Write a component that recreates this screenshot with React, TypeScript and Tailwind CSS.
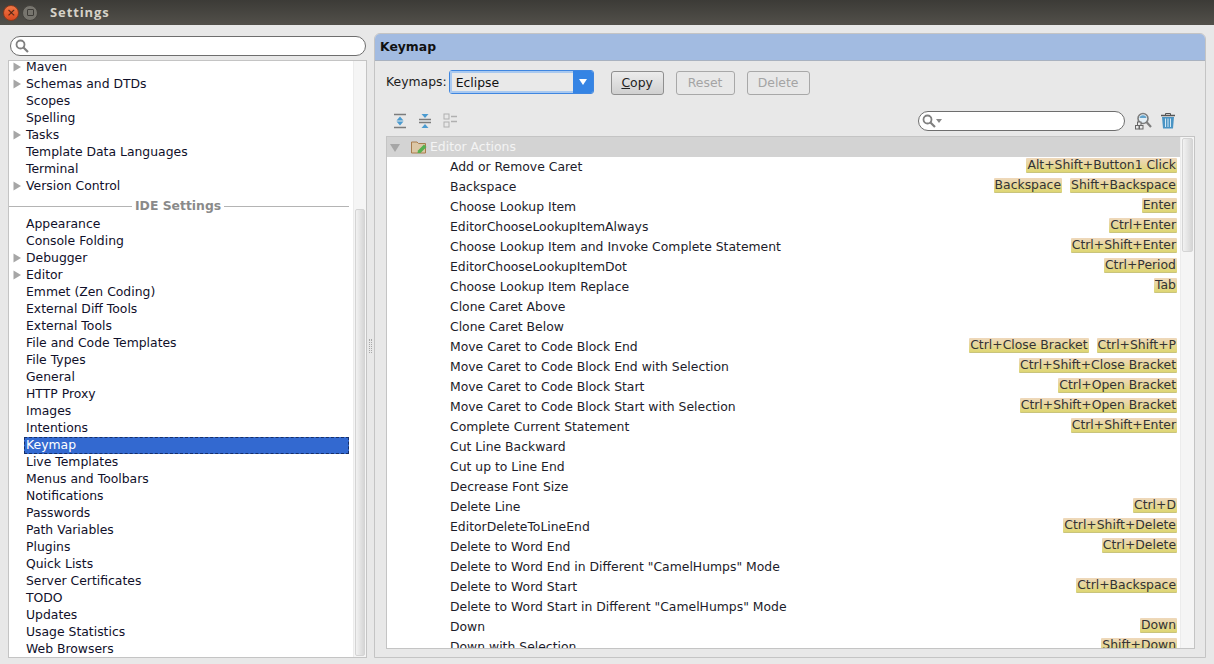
import React from "react";

const top1 = [
  ["Maven", 1], ["Schemas and DTDs", 1], ["Scopes", 0], ["Spelling", 0], ["Tasks", 1],
  ["Template Data Languages", 0], ["Terminal", 0], ["Version Control", 1],
] as const;
const top2 = [
  ["Appearance", 0], ["Console Folding", 0], ["Debugger", 1], ["Editor", 1], ["Emmet (Zen Coding)", 0],
  ["External Diff Tools", 0], ["External Tools", 0], ["File and Code Templates", 0], ["File Types", 0],
  ["General", 0], ["HTTP Proxy", 0], ["Images", 0], ["Intentions", 0], ["Keymap", 0], ["Live Templates", 0],
  ["Menus and Toolbars", 0], ["Notifications", 0], ["Passwords", 0], ["Path Variables", 0], ["Plugins", 0],
  ["Quick Lists", 0], ["Server Certificates", 0], ["TODO", 0], ["Updates", 0], ["Usage Statistics", 0], ["Web Browsers", 0],
] as const;
const rows: [string, string[]][] = [
  ["Add or Remove Caret", ["Alt+Shift+Button1 Click"]],
  ["Backspace", ["Backspace", "Shift+Backspace"]],
  ["Choose Lookup Item", ["Enter"]],
  ["EditorChooseLookupItemAlways", ["Ctrl+Enter"]],
  ["Choose Lookup Item and Invoke Complete Statement", ["Ctrl+Shift+Enter"]],
  ["EditorChooseLookupItemDot", ["Ctrl+Period"]],
  ["Choose Lookup Item Replace", ["Tab"]],
  ["Clone Caret Above", []],
  ["Clone Caret Below", []],
  ["Move Caret to Code Block End", ["Ctrl+Close Bracket", "Ctrl+Shift+P"]],
  ["Move Caret to Code Block End with Selection", ["Ctrl+Shift+Close Bracket"]],
  ["Move Caret to Code Block Start", ["Ctrl+Open Bracket"]],
  ["Move Caret to Code Block Start with Selection", ["Ctrl+Shift+Open Bracket"]],
  ["Complete Current Statement", ["Ctrl+Shift+Enter"]],
  ["Cut Line Backward", []],
  ["Cut up to Line End", []],
  ["Decrease Font Size", []],
  ["Delete Line", ["Ctrl+D"]],
  ["EditorDeleteToLineEnd", ["Ctrl+Shift+Delete"]],
  ["Delete to Word End", ["Ctrl+Delete"]],
  ['Delete to Word End in Different "CamelHumps" Mode', []],
  ["Delete to Word Start", ["Ctrl+Backspace"]],
  ['Delete to Word Start in Different "CamelHumps" Mode', []],
  ["Down", ["Down"]],
  ["Down with Selection", ["Shift+Down"]],
];

function Tri() {
  return <svg width="9" height="10" viewBox="0 0 9 10" className="absolute left-[4px] top-[3px]"><path d="M0.5 0.5 L8 5 L0.5 9.5 Z" fill="#a6a6a6" /></svg>;
}
function TreeRow({ name, arrow }: { name: string; arrow: number }) {
  const sel = name === "Keymap";
  return (
    <div className="relative h-[17px] pl-[17px] leading-[16px] whitespace-nowrap">
      {arrow ? <Tri /> : null}
      {sel ? (
        <div className="h-[17px] -ml-[2px] mr-[1px] bg-[#3369d0] border border-[#16306a] border-dashed text-white pl-[1px] leading-[14px]">{name}</div>
      ) : (
        <span className="text-[#10102a]">{name}</span>
      )}
    </div>
  );
}
function Glass({ color = "#808080" }: { color?: string }) {
  return (
    <svg width="14" height="14" viewBox="0 0 14 14" fill="none" stroke={color}>
      <circle cx="5.5" cy="5.5" r="4" strokeWidth="1.8" />
      <path d="M8.5 8.5 L13 13" strokeWidth="2.2" />
    </svg>
  );
}
function Btn({ children, on, w }: { children: React.ReactNode; on?: boolean; w: string }) {
  return (
    <div className={(on
      ? "h-[24px] flex items-center justify-center rounded-[3px] border border-[#8f8f8f] bg-gradient-to-b from-[#ececec] to-[#d0d0d0] text-[#222] "
      : "h-[24px] flex items-center justify-center rounded-[3px] border border-[#a8a8a8] bg-[#e8e8e8] text-[#a4a4a4] ") + w}>{children}</div>
  );
}
function Badge({ t }: { t: string }) {
  return <span className="h-[15px] px-[1px] leading-[13px] rounded-[1px] text-[#333] bg-gradient-to-b from-[#efd8bc] to-[#ded672] border-b border-[#c9c47c]">{t}</span>;
}

export default function App() {
  return (
    <div className="w-[1214px] h-[664px] overflow-hidden flex flex-col bg-[#e8e8e8] text-[12.4px] text-[#1c1c1c] font-['DejaVu_Sans',sans-serif]">
      <div className="h-[25px] shrink-0 flex items-center pl-[3px] bg-gradient-to-b from-[#3c3b37] to-[#52504a]">
        <div className="w-[16px] h-[16px] rounded-full bg-gradient-to-b from-[#f07746] to-[#d9481f] border border-[#8a3a1d] flex items-center justify-center text-[#4a1c0c] text-[11px] leading-none">×</div>
        <div className="ml-[3px] w-[16px] h-[16px] rounded-full bg-[#77756e] border border-[#44423d] flex items-center justify-center">
          <div className="w-[7px] h-[7px] rounded-[1px] border border-[#3e3c38]" />
        </div>
        <div className="ml-[12px] text-[#d6d2c8] font-bold text-[13px] tracking-[0.9px] font-['Open_Sans',sans-serif]">Settings</div>
      </div>
      <div className="flex-1 flex min-h-0 pt-[8px] pb-[6px] pl-[8px] pr-[8px]">
        <div className="w-[359px] shrink-0 flex flex-col">
          <div className="h-[20px] ml-[2px] mt-[3px] w-[356px] rounded-[10px] border border-[#6e6e6e] bg-white flex items-center pl-[4px]">
            <Glass />
          </div>
          <div className="mt-[4px] flex-1 min-h-0 flex border border-[#c4c4c4] bg-white overflow-hidden">
            <div className="flex-1 min-w-0 overflow-hidden">
              <div className="-mt-[2px]">
                {top1.map(([n, a]) => <TreeRow key={n} name={n} arrow={a} />)}
              </div>
              <div className="h-[22px] mr-[4px] flex items-center">
                <div className="w-[123px] h-px bg-[#b4b4b4]" />
                <div className="px-[3px] font-bold text-[#8a8a8a]">IDE Settings</div>
                <div className="flex-1 h-px bg-[#b4b4b4]" />
              </div>
              <div className="mr-[3px] -mt-[1px]">
                {top2.map(([n, a]) => <TreeRow key={n} name={n} arrow={a} />)}
              </div>
            </div>
            <div className="w-[13px] shrink-0 bg-[#f5f5f5] border-l border-[#ececec] flex flex-col pl-[1px] pr-[1px]">
              <div className="mt-[148px] flex-1 mb-[1px] rounded-[2px] border border-[#d4d4d4] bg-gradient-to-r from-[#f2f2f2] to-[#d6d6d6]" />
            </div>
          </div>
        </div>
        <div className="w-[7px] shrink-0 flex items-center justify-center">
          <div className="h-[14px] w-[3px] border-x border-dotted border-[#a8a8a8]" />
        </div>
        <div className="flex-1 min-w-0 flex flex-col border border-[#c4c4c4] rounded-t-[6px] overflow-hidden">
          <div className="h-[27px] shrink-0 bg-[#a2bbe1] border-b border-[#a9b2c0] flex items-center pl-[5px] font-bold text-[#111]">Keymap</div>
          <div className="h-[36px] mt-[9px] shrink-0 flex items-start pl-[11px]">
            <div className="mt-[3px] mr-[2px] leading-[18px]">Keymaps:</div>
            <div className="w-[145px] h-[24px] flex rounded-[3px] border border-[#3f86e0] overflow-hidden">
              <div className="flex-1 bg-[#e9e9e9] pl-[4px] leading-[20px] border-2 border-[#a9c9f0] border-r-0 text-[#111]">Eclipse</div>
              <div className="w-[20px] bg-[#3584e4] flex items-center justify-center">
                <svg width="10" height="6" viewBox="0 0 10 6"><path d="M1 0 L9 0 L5 6 Z" fill="#fff" /></svg>
              </div>
            </div>
            <div className="ml-[17px] mt-[1px] flex gap-[12px]">
              <Btn on w="w-[53px]"><span><span className="underline">C</span>opy</span></Btn>
              <Btn w="w-[59px]">Reset</Btn>
              <Btn w="w-[63px]">Delete</Btn>
            </div>
          </div>
          <div className="h-[25px] shrink-0 mt-[5px] flex items-start pl-[18px] pr-[29px]">
            <svg width="14" height="16" viewBox="0 0 14 16" className="mt-[2px]">
              <path d="M1 1.5H13M1 14.5H13" stroke="#7c7c7c" strokeWidth="1.6" />
              <path d="M7 3.5 L10.5 7.5 H3.5 Z M7 12.5 L10.5 8.5 H3.5 Z" fill="#4b9bd0" />
            </svg>
            <svg width="14" height="16" viewBox="0 0 14 16" className="mt-[2px] ml-[11px]">
              <path d="M1 6.5H13M1 9.5H13" stroke="#7c7c7c" strokeWidth="1.4" />
              <path d="M7 5 L10.5 1 H3.5 Z M7 11 L10.5 15 H3.5 Z" fill="#4b9bd0" />
            </svg>
            <svg width="15" height="15" viewBox="0 0 15 15" className="mt-[2px] ml-[11px]" fill="none">
              <rect x="1" y="1" width="5" height="5" stroke="#b0b0b0" />
              <rect x="1" y="9" width="5" height="5" stroke="#b0b0b0" />
              <path d="M8 3.5H14M8 8.5H14" stroke="#b0b0b0" strokeWidth="1.4" />
            </svg>
            <div className="ml-auto mr-[1px] w-[207px] h-[20px] rounded-[10px] border border-[#6e6e6e] bg-white flex items-center pl-[3px]">
              <Glass />
              <svg width="6" height="4" viewBox="0 0 6 4"><path d="M0 0H6L3 4Z" fill="#888" /></svg>
            </div>
            <svg width="18" height="18" viewBox="0 0 18 18" className="ml-[8px] mt-[1px]" fill="none">
              <circle cx="9" cy="6.5" r="5" fill="#e4eef4" stroke="#7d7d7d" strokeWidth="1.6" />
              <path d="M5.5 6 A3.6 3.6 0 0 1 12.5 6 Z" fill="#62a3cc" />
              <path d="M12.5 10 L17 15" stroke="#7d7d7d" strokeWidth="2.2" />
              <rect x="1.5" y="13.5" width="3.5" height="3.5" fill="#e8e8e8" stroke="#666" />
              <rect x="5.5" y="13.5" width="3.5" height="3.5" fill="#e8e8e8" stroke="#666" />
              <rect x="3.5" y="10" width="3.5" height="3.5" fill="#e8e8e8" stroke="#666" />
            </svg>
            <svg width="16" height="17" viewBox="0 0 16 17" className="ml-[8px] mt-[1px]">
              <path d="M1 3.5H15" stroke="#555" strokeWidth="1.6" />
              <path d="M5.5 3 V1.5 H10.5 V3" stroke="#555" fill="none" />
              <path d="M2 5 H14 L13 16.5 H3 Z" fill="#4a94c4" />
              <path d="M5.5 6.5V15M8 6.5V15M10.5 6.5V15" stroke="#d4e8f4" />
            </svg>
          </div>
          <div className="flex-1 min-h-0 ml-[11px] mr-[10px] mb-[8px] flex border border-[#c4c4c4] bg-white overflow-hidden">
            <div className="flex-1 min-w-0 overflow-hidden">
              <div className="relative h-[20px] bg-[#d3d3d3] pl-[43px] flex items-center text-[#f4f4f4]">
                <svg width="10" height="8" viewBox="0 0 10 8" className="absolute left-[3px] top-[7px]"><path d="M0 0H10L5 8Z" fill="#a6a6a6" /></svg>
                <svg width="16" height="14" viewBox="0 0 16 14" className="absolute left-[24px] top-[3px]">
                  <path d="M0.5 2 H6 L7.5 3.5 H14.5 V13 H0.5 Z" fill="#dcc7a6" stroke="#a87c4c" />
                  <path d="M6.5 13 L7 10.5 L13 4.5 L15.5 7 L9.5 13 Z" fill="#55b04f" />
                </svg>
                Editor Actions
              </div>
              {rows.map(([n, ks]) => (
                <div key={n} className="h-[20px] flex items-center pl-[63px] pr-[3px] whitespace-nowrap">
                  <span className="text-[#1c1c2a]">{n}</span>
                  <div className="ml-auto flex gap-[8px] -mt-[3px]">
                    {ks.map((k) => <Badge key={k} t={k} />)}
                  </div>
                </div>
              ))}
            </div>
            <div className="w-[14px] shrink-0 bg-[#f5f5f5] border-l border-[#ececec] px-[1px] pt-[1px]">
              <div className="h-[114px] rounded-[2px] border border-[#d4d4d4] bg-gradient-to-r from-[#f2f2f2] to-[#d6d6d6]" />
            </div>
          </div>
        </div>
      </div>
    </div>
  );
}
